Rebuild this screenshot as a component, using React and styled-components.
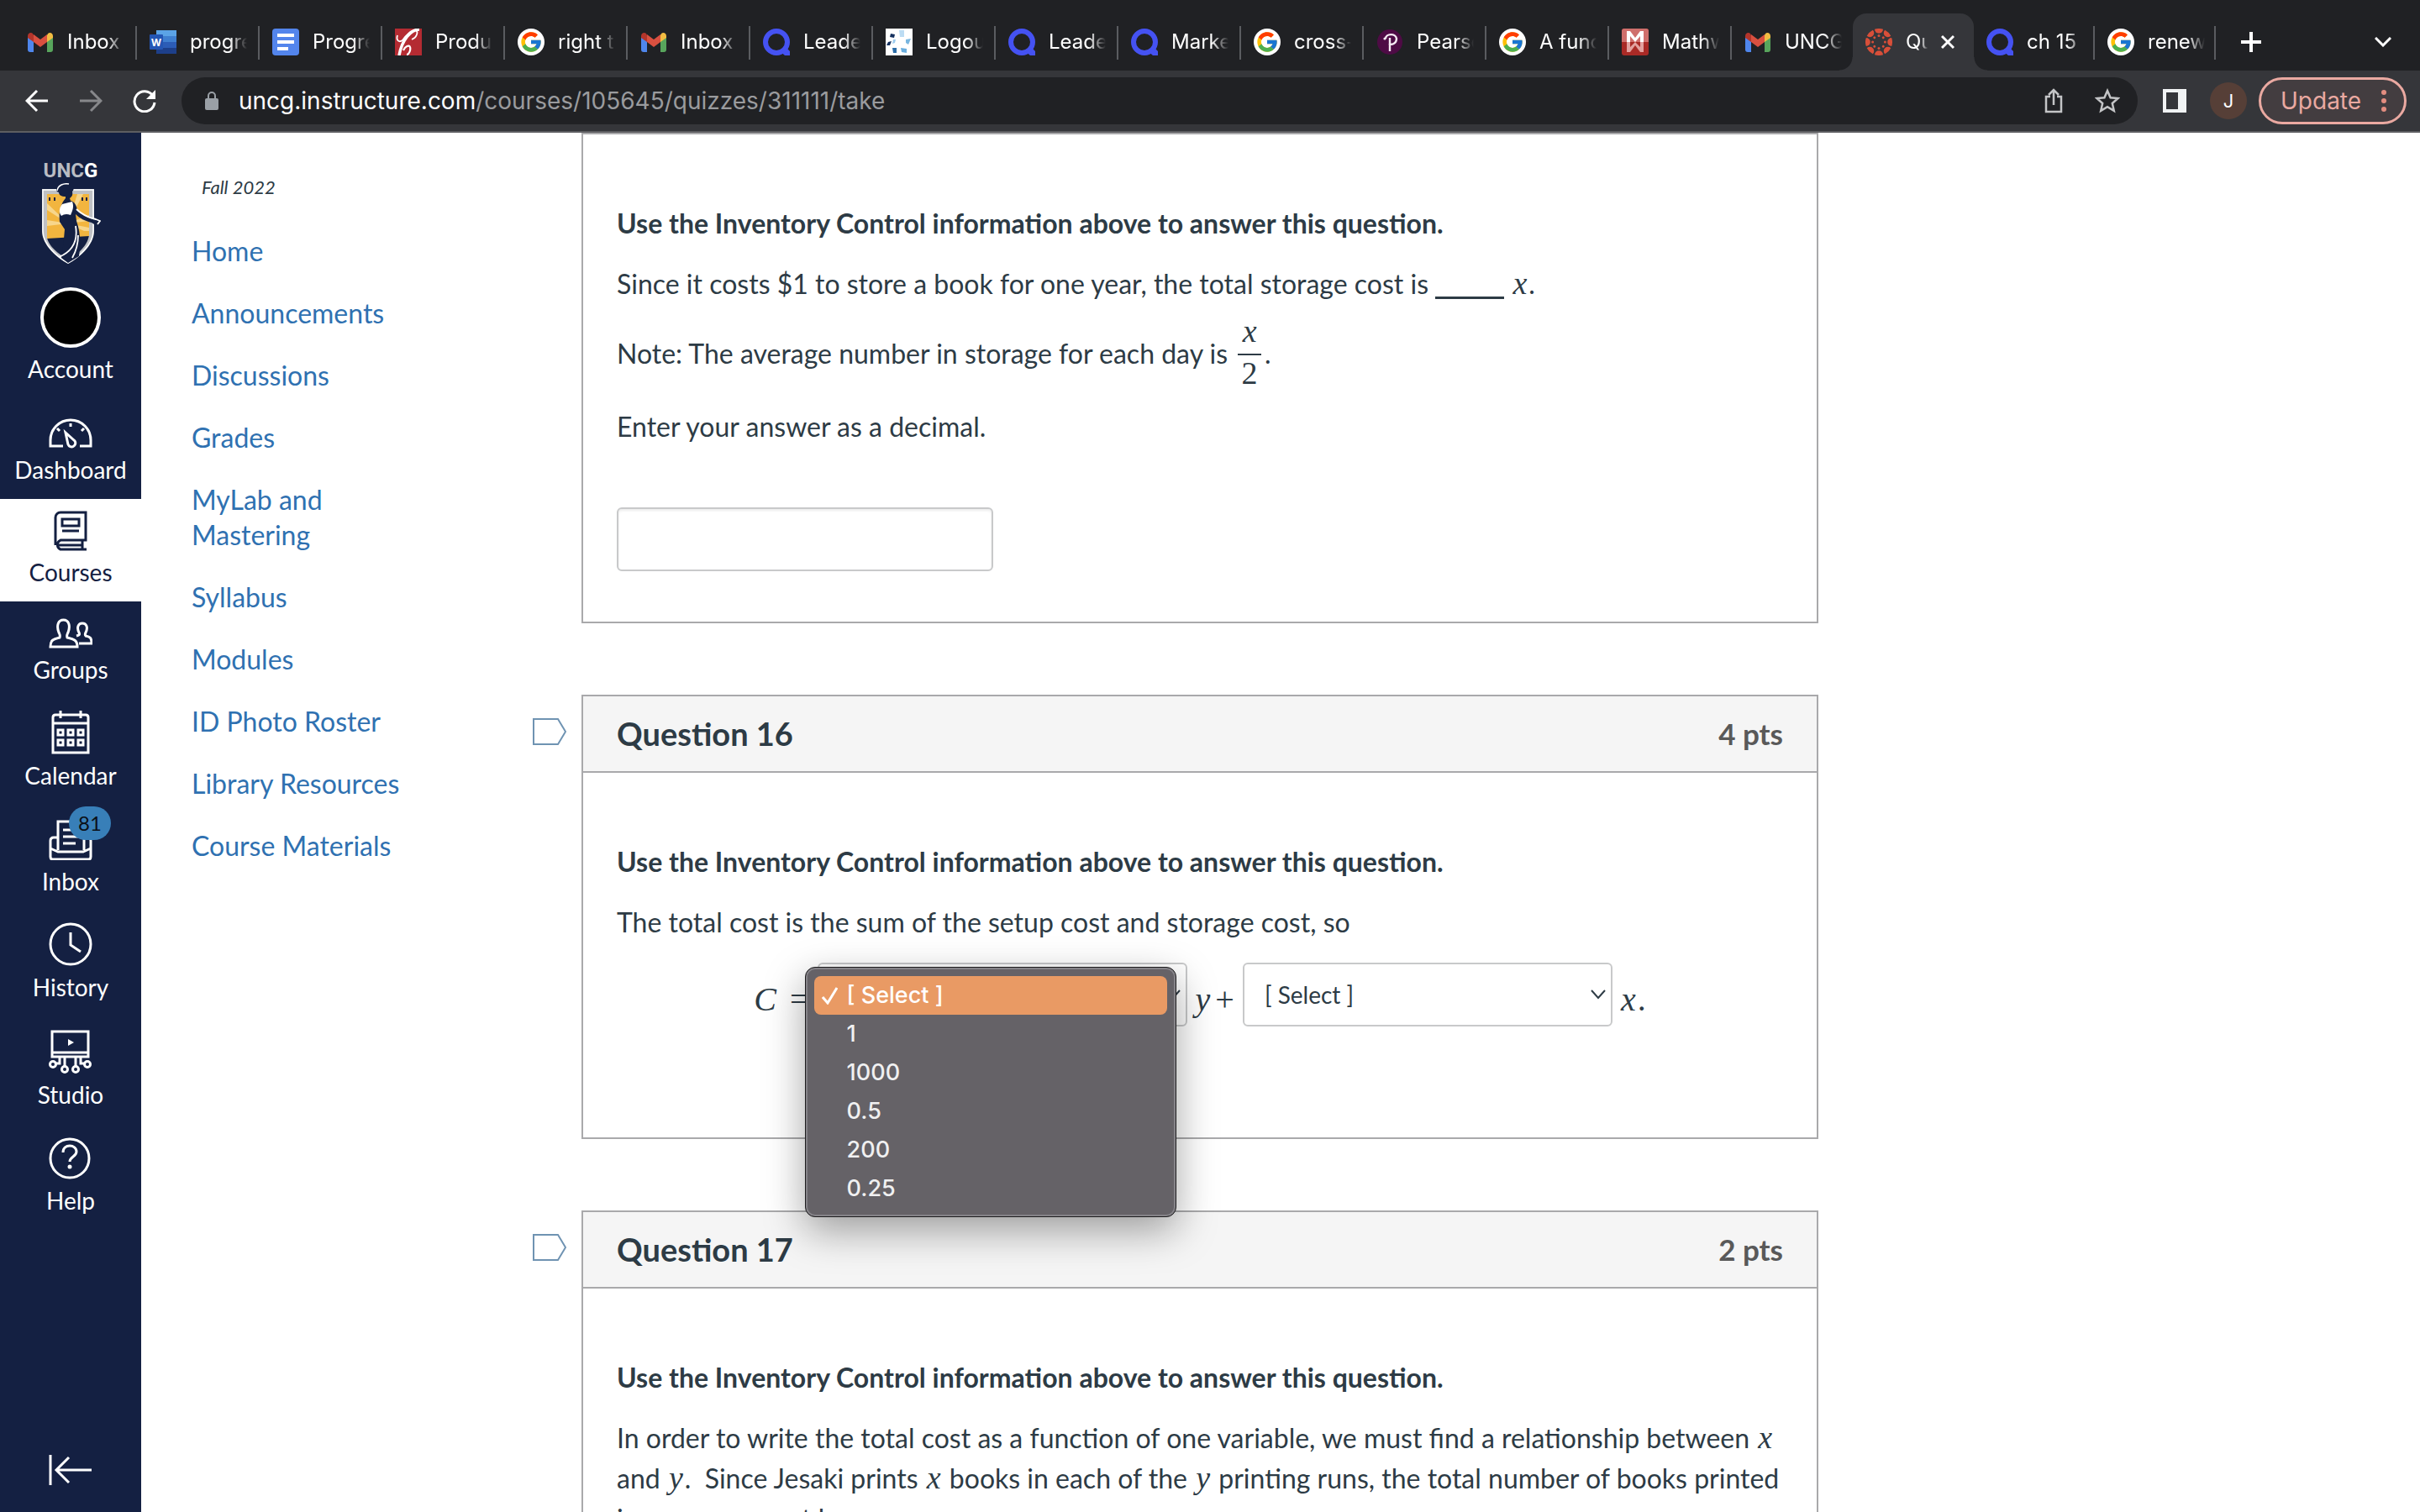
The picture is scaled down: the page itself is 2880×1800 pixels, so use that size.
import React from 'react';
import styled, { createGlobalStyle, css } from 'styled-components';
import { FcGoogle } from 'react-icons/fc';

const ui = `Inter, Roboto, "Liberation Sans", sans-serif`;
const lato = `Lato, "Open Sans", "Liberation Sans", sans-serif`;
const serif = `"Liberation Serif", "DejaVu Serif", serif`;

const ink = '#2d3b45';
const navy = '#142042';
const rule = '#a9a9ab';

const GlobalStyle = createGlobalStyle`
  *, *::before, *::after { box-sizing: border-box; }
  body { margin: 0; background: #fff; color: ${ink}; font-family: ${lato}; font-size: 32px; }
  h2, p, ul { margin: 0; padding: 0; }
  ul { list-style: none; }
  button { font: inherit; border: 0; background: none; padding: 0; color: inherit; }
  svg { display: block; flex: none; }
`;

const Window = styled.div`
  display: flex;
  flex-direction: column;
  height: 100vh;
  overflow: hidden;
`;

/* ---------- browser chrome ---------- */

const TabStrip = styled.div`
  display: flex;
  align-items: flex-end;
  flex: none;
  height: 84px;
  padding: 0 28px 0 17px;
  background: #202124;
  color: #fff;
  font-family: ${ui};
  font-size: 24px;
`;

const Tab = styled.div`
  position: relative;
  display: flex;
  align-items: center;
  gap: 16px;
  flex: none;
  width: ${(p) => (p.$narrow ? 144 : 146)}px;
  height: 68px;
  padding-left: 15px;
  ${(p) =>
    p.$line &&
    css`
      &::after {
        content: '';
        position: absolute;
        right: 0;
        top: 15px;
        width: 2px;
        height: 40px;
        background: #5a5c60;
      }
    `}
  ${(p) =>
    p.$active &&
    css`
      background: #35363a;
      border-radius: 16px 16px 0 0;
      &::before,
      &::after {
        content: '';
        position: absolute;
        bottom: 0;
        width: 16px;
        height: 16px;
      }
      &::before {
        right: 100%;
        background: radial-gradient(circle at 0 0, transparent 15px, #35363a 16px);
      }
      &::after {
        left: 100%;
        background: radial-gradient(circle at 100% 0, transparent 15px, #35363a 16px);
      }
    `}
`;

const TabTitle = styled.span`
  width: ${(p) => (p.$short ? 26 : 68)}px;
  overflow: hidden;
  white-space: nowrap;
  line-height: 32px;
  mask-image: linear-gradient(to right, #000 70%, transparent);
`;

const ChromeButton = styled.button`
  display: flex;
  align-items: center;
  justify-content: center;
  flex: none;
  width: 32px;
  height: 68px;
  ${(p) => p.$end && 'margin-left: auto;'}
`;

const PlusButton = styled(ChromeButton)`
  margin-left: 26px;
`;

const Toolbar = styled.div`
  display: flex;
  align-items: center;
  flex: none;
  height: 74px;
  padding: 0 16px 0 28px;
  background: #35363a;
  border-bottom: 2px solid #5d5e61;
  font-family: ${ui};
  font-size: 28px;
`;

const NavButtons = styled.div`
  display: flex;
  gap: 32px;
  margin-right: 28px;
`;

const ToolButton = styled.button`
  display: flex;
  align-items: center;
  justify-content: center;
  width: 32px;
  height: 40px;
`;

const AddressBar = styled.div`
  display: flex;
  align-items: center;
  flex: 1;
  height: 56px;
  padding: 0 20px 0 28px;
  border-radius: 28px;
  background: #202124;
  color: #9a9b9e;
`;

const Address = styled.div`
  flex: 1;
  margin-left: 24px;
  line-height: 36px;
  white-space: nowrap;
`;

const Host = styled.span`
  color: #fff;
`;

const AddressActions = styled.div`
  display: flex;
  gap: 32px;
`;

const ToolbarEnd = styled.div`
  display: flex;
  align-items: center;
  gap: 14px;
  margin-left: 30px;
`;

const Profile = styled.button`
  width: 44px;
  height: 44px;
  margin: 0 0 0 14px;
  border-radius: 50%;
  background: #563f37;
  color: #fff;
  font-size: 22px;
`;

const UpdateButton = styled.button`
  display: flex;
  align-items: center;
  justify-content: space-between;
  width: 176px;
  height: 56px;
  padding: 0 20px 0 23px;
  border: 3px solid #eaa9a1;
  border-radius: 28px;
  background: #433d40;
  color: #eaa9a1;
`;

/* ---------- page ---------- */

const Page = styled.div`
  display: grid;
  grid-template-columns: 168px 466px minmax(0, 1fr) 716px;
  grid-template-rows: minmax(0, 1fr);
  flex: 1;
  min-height: 0;
  overflow: hidden;
`;

const GlobalNav = styled.nav`
  display: flex;
  flex-direction: column;
  min-height: 0;
  padding: 30px 0;
  background: ${navy};
  color: #fff;
`;

const LogoLink = styled.a`
  display: flex;
  flex-direction: column;
  align-items: center;
  height: 142px;
  color: #b9bcc3;
  text-decoration: none;
  font: 700 24px/30px Roboto, sans-serif;
`;

const LogoAccent = styled.span`
  color: #fff;
`;

const NavItem = styled.a`
  display: flex;
  flex-direction: column;
  align-items: center;
  padding: 12px 0 18px;
  gap: 8px;
  background: ${(p) => (p.$active ? '#fff' : 'transparent')};
  color: ${(p) => (p.$active ? navy : '#fff')};
  font-size: 28px;
  line-height: 34px;
  text-decoration: none;
`;

const NavIcon = styled.span`
  position: relative;
  display: flex;
  align-items: flex-end;
  height: ${(p) => p.$height}px;
`;

const Avatar = styled.span`
  width: 72px;
  height: 72px;
  border: 4px solid #fff;
  border-radius: 50%;
  background: #000;
`;

const Badge = styled.span`
  position: absolute;
  left: 24px;
  top: -10px;
  width: 50px;
  height: 40px;
  border-radius: 20px;
  background: #387fb8;
  color: #0b0f16;
  font-size: 24px;
  line-height: 40px;
  text-align: center;
`;

const CollapseButton = styled.button`
  display: flex;
  justify-content: center;
  margin-top: auto;
`;

const CourseNav = styled.nav`
  padding: 50px 120px 0 60px;
`;

const Term = styled.p`
  padding-left: 12px;
  font-size: 22px;
  font-style: italic;
  line-height: 30px;
`;

const CourseLinks = styled.ul`
  padding-top: 24px;
`;

const CourseLink = styled.a`
  display: block;
  padding: 16px 0;
  color: #2f71b1;
  line-height: 42px;
  text-decoration: none;
`;

const Main = styled.main`
  display: flex;
  flex-direction: column;
  gap: 85px;
  min-width: 0;
`;

const QuestionRow = styled.div`
  display: flex;
  flex: none;
`;

const FlagColumn = styled.div`
  flex: 0 0 58px;
  padding-top: 28px;
`;

const Card = styled.section`
  flex: 1;
  min-width: 0;
  border: 2px solid ${rule};
`;

const CardHeader = styled.header`
  display: flex;
  justify-content: space-between;
  padding: 20px 40px 21px;
  background: #f5f5f5;
  border-bottom: 2px solid ${rule};
  font-weight: 700;
  line-height: 48px;
`;

const CardTitle = styled.h2`
  font-size: 38px;
`;

const Points = styled.span`
  color: #595959;
  font-size: 35px;
`;

const CardBody = styled.div`
  display: flex;
  flex-direction: column;
  gap: 24px;
  padding: 82px 40px ${(p) => p.$bottom}px;
  line-height: 48px;
`;

const NoteLine = styled.p`
  display: flex;
  align-items: center;
  height: 74px;
  padding-bottom: 4px;
`;

const Var = styled.i`
  font-family: ${serif};
  font-size: 38px;
  line-height: 36px;
  padding: 0 2px;
`;

const Blank = styled.span`
  display: inline-block;
  width: 82px;
  height: 3px;
  background: ${ink};
  vertical-align: -6px;
`;

const Fraction = styled.span`
  display: flex;
  flex-direction: column;
  align-items: center;
  width: 28px;
  margin: 0 4px 0 12px;
  font-family: ${serif};
  font-size: 38px;
  line-height: 42px;
`;

const Numerator = styled.span`
  width: 28px;
  padding-bottom: 10px;
  border-bottom: 2px solid ${ink};
  font-style: italic;
  line-height: 34px;
  text-align: center;
`;

const AnswerInput = styled.input`
  width: 448px;
  height: 76px;
  margin-top: 48px;
  padding: 0 24px;
  border: 2px solid #c8c9ca;
  border-radius: 6px;
  box-shadow: inset 0 2px 3px rgba(0, 0, 0, 0.08);
  font: 28px/40px ${lato};
`;

const Equation = styled.div`
  display: flex;
  align-items: center;
  justify-content: center;
  gap: 10px;
`;

const MathText = styled.span`
  display: flex;
  gap: ${(p) => p.$gap || 2}px;
  padding-top: 12px;
  font-family: ${serif};
  font-size: 40px;
  line-height: 48px;
`;

const SelectWrap = styled.div`
  position: relative;
  width: 440px;
`;

const Select = styled.select`
  display: block;
  width: 100%;
  height: 76px;
  padding: 0 24px;
  appearance: none;
  border: 2px solid #c8c9ca;
  border-radius: 6px;
  background: #fff;
  color: ${ink};
  font: 28px/40px ${lato};
`;

const SelectArrow = styled.svg`
  position: absolute;
  right: 8px;
  top: 32px;
  pointer-events: none;
`;

const Menu = styled.ul`
  position: absolute;
  z-index: 2;
  left: -15px;
  top: 5px;
  width: 442px;
  border: 1px solid #1d1c1e;
  border-radius: 12px;
  background: #656267;
  box-shadow: inset 0 0 0 2px #858388, 0 16px 48px rgba(0, 0, 0, 0.36);
  color: #f0f0f1;
  font-family: ${ui};
  font-size: 27px;
  font-weight: 500;
  && { padding: 10px; }
`;

const MenuOption = styled.li`
  display: flex;
  align-items: center;
  height: 46px;
  padding-left: ${(p) => (p.$selected ? 9 : 39)}px;
  gap: 11px;
  border-radius: 8px;
  background: ${(p) => (p.$selected ? '#e99a64' : 'transparent')};
  color: ${(p) => (p.$selected ? '#fff' : 'inherit')};
  line-height: 46px;
`;

/* ---------- favicons ---------- */

const GmailIcon = () => (
  <svg width="32" height="32" viewBox="0 0 32 32">
    <path d="M1 9v16a3 3 0 0 0 3 3h4V15z" fill="#4f86ec" />
    <path d="M31 9v16a3 3 0 0 1-3 3h-4V15z" fill="#58a55c" />
    <path d="M24 8v8l7-5V9c0-4-4-5-6-3z" fill="#f2bd42" />
    <path d="M1 9v2l7 5V8L7 6C5 4 1 5 1 9z" fill="#b3352b" />
    <path d="M8 7l8 6 8-6v9l-8 6-8-6z" fill="#d95040" />
  </svg>
);

const WordIcon = () => (
  <svg width="32" height="32" viewBox="0 0 32 32">
    <rect x="8" y="2" width="24" height="7" fill="#5ba3e6" />
    <rect x="8" y="9" width="24" height="7" fill="#3f7fd0" />
    <rect x="8" y="16" width="24" height="7" fill="#2c5cb6" />
    <rect x="8" y="23" width="24" height="7" fill="#1d3f8a" />
    <rect x="0" y="7" width="16" height="18" rx="1" fill="#2456b4" />
    <text x="8" y="21" textAnchor="middle" fontFamily="Inter, sans-serif" fontWeight="700" fontSize="12" fill="#fff">W</text>
  </svg>
);

const DocsIcon = () => (
  <svg width="32" height="32" viewBox="0 0 32 32">
    <rect width="32" height="32" rx="4" fill="#5385ec" />
    <path d="M6 6h20v4H6zM6 14h20v4H6zM6 22h13v4H6z" fill="#fff" />
  </svg>
);

const ScriptIcon = () => (
  <svg width="32" height="32" viewBox="0 0 32 32">
    <rect width="32" height="32" fill="#b42b32" />
    <path d="M29 1C19 1 8 14 5 32" fill="none" stroke="#fff" strokeWidth="3.5" />
    <path d="M20 13c6-2 8-9 5-11-5-1-12 6-16 12-4 3-8 0-6-6" fill="none" stroke="#fff" strokeWidth="1.8" />
    <path d="M10 26c2-5 7-7 8-4s-1 9-4 9" fill="none" stroke="#fff" strokeWidth="2.2" />
  </svg>
);

const GoogleIcon = () => (
  <svg width="32" height="32" viewBox="0 0 32 32">
    <circle cx="16" cy="16" r="16" fill="#fff" />
    <FcGoogle x="2" y="2" width="28" height="28" size={28} />
  </svg>
);

const RingIcon = () => (
  <svg width="32" height="32" viewBox="0 0 32 32">
    <circle cx="16" cy="16" r="13" fill="none" stroke="#4552f2" strokeWidth="6" />
    <path d="M19 26l10-2 3 3v5h-6z" fill="#4552f2" />
  </svg>
);

const BlocksIcon = () => (
  <svg width="32" height="32" viewBox="0 0 32 32">
    <rect width="32" height="32" fill="#fff" />
    <path d="M6 6l5 1-1 4-5-1zM3 16l4-1-2 5-4 0z" fill="#16315f" />
    <path d="M16 2h6v8h-5z" fill="#bcdcf3" />
    <path d="M24 13l6-1-3 7-3-2z" fill="#79b6e0" />
    <path d="M8 23h5v6H9z" fill="#2c6da8" />
    <path d="M18 23l7 1v5l-6-1z" fill="#6aaede" />
    <path d="M9 13l3 0-1 4-3 1z" fill="#9ccbee" />
  </svg>
);

const PearsonIcon = () => (
  <svg width="32" height="32" viewBox="0 0 32 32">
    <circle cx="16" cy="16" r="15" fill="#4e0b45" />
    <path d="M11 12c0-6 12-7 13 0 0 6-6 8-9 6M16 11v16" fill="none" stroke="#f5e9f3" strokeWidth="2.4" />
    <circle cx="10" cy="12" r="1.6" fill="#f5e9f3" />
  </svg>
);

const MirrorIcon = () => (
  <svg width="32" height="32" viewBox="0 0 32 32">
    <rect width="32" height="32" rx="3" fill="#a92a26" />
    <path d="M0 3a3 3 0 0 1 3-3h26a3 3 0 0 1 3 3v13H0z" fill="#cf6f6c" />
    <path d="M6 16V3h4l6 8 6-8h4v13h-4V9l-6 7-6-7v7z" fill="#fff" />
    <path d="M6 28V16h4v6l6-6 6 6v-6h4v12h-4l-6-8-6 8z" fill="#e2a19f" />
  </svg>
);

const CanvasIcon = () => (
  <svg width="32" height="32" viewBox="0 0 32 32" fill="#d84f39">
    {[0, 45, 90, 135, 180, 225, 270, 315].map((a) => (
      <g key={a} transform={`rotate(${a} 16 16)`}>
        <path d="M11 .8a16 16 0 0 1 10 0 5 5 0 0 1-10 0z" />
        <circle cx="16" cy="8.6" r="1.500" />
      </g>
    ))}
  </svg>
);

const tabs = [
  [GmailIcon, 'Inbox'],
  [WordIcon, 'progre'],
  [DocsIcon, 'Progre'],
  [ScriptIcon, 'Produ'],
  [GoogleIcon, 'right t'],
  [GmailIcon, 'Inbox'],
  [RingIcon, 'Leade'],
  [BlocksIcon, 'Logou'],
  [RingIcon, 'Leade'],
  [RingIcon, 'Marke'],
  [GoogleIcon, 'cross-'],
  [PearsonIcon, 'Pearso'],
  [GoogleIcon, 'A func'],
  [MirrorIcon, 'Mathw'],
  [GmailIcon, 'UNCG'],
  [CanvasIcon, 'Qu'],
  [RingIcon, 'ch 15'],
  [GoogleIcon, 'renew'],
];
const ACTIVE = 15;

/* ---------- line icons ---------- */

const Line = ({ w, h, sw = 3, children, ...rest }) => (
  <svg width={w} height={h} viewBox={`0 0 ${w} ${h}`} fill="none" stroke="currentColor" strokeWidth={sw} {...rest}>
    {children}
  </svg>
);

const Shield = () => (
  <svg width="72" height="100" viewBox="0 0 72 100">
    <path d="M2 7h62v50c0 18-20 33-31 39C22 90 2 75 2 57z" fill="#bfc1c5" />
    <path d="M3 8h60v49c0 17-19 32-30 38C22 89 3 74 3 57z" fill="none" stroke="#fff" strokeWidth="1.500" />
    <path d="M8 13h50v44H8z" fill="#f2b53f" />
    <path d="M33 48L8 24v8zM33 48L8 44v7zM33 48L44 13h7zM33 48l25-10v7zM33 48l25 5v4h-6z" fill="#f7d68c" />
    <path d="M8 65l50-3C56 76 42 86 33 91 24 86 10 76 8 65z" fill={navy} />
    <path d="M8 57h50v6L8 66z" fill="#f2b53f" />
    <path d="M30 16c-5 0-8-2-8-5-4-1-4-5 0-6 2-5 11-6 14-2 5 1 4 5 2 7 1 5-1 6-3 8l1 3c5 1 7 6 8 11 6 6 12 9 22 12l4 3-3 4-6-4c-8-2-14-5-19-10l1 8c5 14 5 28 3 42l-13 8-8-6c2-9 3-23 4-34l-6-9c-1-9 0-20 7-28z" fill={navy} />
    <path d="M26 25l12-3c2 5 1 10-2 16-5-2-8-1-11 1-3-4-3-9 1-14z" fill="#fff" />
    <path d="M43 31c6 6 14 10 23 12l5 2-3 4M42 51c3 18-3 30-20 37M45 62c0 12-3 20-7 27" fill="none" stroke="#fff" strokeWidth="1.800" />
    <path d="M20 9c1-7 8-9 14-8" fill="none" stroke="#fff" strokeWidth="1.500" />
    <path d="M11 17v4M17 17v4M50 17v4M55 17v4" stroke={navy} strokeWidth="2" />
  </svg>
);

const DashboardIcon = () => (
  <Line w={52} h={36}>
    <path d="M17 33H2v-7a24 24 0 0 1 48 0v7H37M26 6v4M10 12l3 3M42 12l-3 3" />
    <path d="M20 17l11 10a4.500 4.500 0 1 1-8 4z" />
  </Line>
);
const CoursesIcon = () => (
  <Line w={40} h={48}>
    <path d="M39 46H8a6 6 0 0 1 0-11h30V2H8a6 6 0 0 0-6 6v33M34 35v11M6 41h28" />
    <path d="M10 10h20v8H10zM10 24h20" />
  </Line>
);
const GroupsIcon = () => (
  <Line w={52} h={36}>
    <path d="M2 34c0-8 3-9 11-11 1-3 0-4-1-6-3-8-1-15 5.500-15S26 9 23 17c-1 2-2 3-1 6 8 2 12 3 12 11z" />
    <path d="M33 21c4-1 4-2 3-4-3-6-1-11 4-11s7 5 4 11c-1 2-1 3 0 4 5 1 7 2 7 9H36" />
  </Line>
);
const CalendarIcon = () => (
  <Line w={46} h={52}>
    <path d="M2 50V8q0-3 3-3h36q3 0 3 3v42zM2 15h42M11 0v9M35 0v9" />
    <path d="M8 23h6v6H8zM20 23h6v6h-6zM32 23h6v6h-6zM8 35h6v6H8zM20 35h6v6h-6zM32 35h6v6h-6z" />
  </Line>
);
const InboxIcon = () => (
  <Line w={52} h={48}>
    <path d="M11 36V2h31v34M2 44V25q0-4 4-4h5M41 21h5q4 0 4 4v19q0 3-3 3H5q-3 0-3-3M2 34l9 4h30l9-4M17 12h18M17 20h18M17 28h15" />
  </Line>
);
const HistoryIcon = () => (
  <Line w={52} h={52}>
    <circle cx="26" cy="26" r="24" />
    <path d="M26 12v15l12 8" />
  </Line>
);
const StudioIcon = () => (
  <Line w={52} h={52}>
    <path d="M4 2h43v30H4zM4 27h43M13 32v8H8M19 32v12M32 32v12M38 32v8h5" />
    <circle cx="5" cy="41" r="3.500" />
    <circle cx="19" cy="47" r="3.500" />
    <circle cx="32" cy="47" r="3.500" />
    <circle cx="46" cy="41" r="3.500" />
    <path d="M23 11l7 4-7 4z" fill="currentColor" stroke="none" />
  </Line>
);
const HelpIcon = () => (
  <Line w={52} h={50}>
    <circle cx="25" cy="25" r="23" />
    <path d="M17 18c0-11 16-10 16-1 0 6-8 6-8 12" />
    <circle cx="25" cy="35" r="2.500" fill="currentColor" stroke="none" />
  </Line>
);

const FlagIcon = () => (
  <svg width="40" height="32" viewBox="0 0 40 32">
    <path d="M1 1h29l9 15-9 15H1z" fill="#fff" stroke="#6f93b2" strokeWidth="2" />
  </svg>
);

const Chevron = () => (
  <SelectArrow width="18" height="12" viewBox="0 0 18 12" fill="none" stroke={ink} strokeWidth="2">
    <path d="M1 1l8 9 8-9" />
  </SelectArrow>
);

const globalItems = [
  ['Dashboard', DashboardIcon, 48],
  ['Courses', CoursesIcon, 50],
  ['Groups', GroupsIcon, 44],
  ['Calendar', CalendarIcon, 54],
  ['Inbox', InboxIcon, 54],
  ['History', HistoryIcon, 54],
  ['Studio', StudioIcon, 56],
  ['Help', HelpIcon, 54],
];

const courseLinks = [
  'Home', 'Announcements', 'Discussions', 'Grades', 'MyLab and Mastering', 'Syllabus',
  'Modules', 'ID Photo Roster', 'Library Resources', 'Course Materials',
];

const options = ['[ Select ]', '1', '1000', '0.5', '200', '0.25'];

function BrowserChrome() {
  return (
    <>
      <TabStrip>
        {tabs.map(([Icon, title], i) => (
          <Tab key={i} $active={i === ACTIVE} $narrow={i > 13} $line={i !== ACTIVE && i !== ACTIVE - 1}>
            <Icon />
            <TabTitle $short={i === ACTIVE}>{title}</TabTitle>
            {i === ACTIVE && (
              <button aria-label="Close tab">
                <Line w={16} h={18}><path d="M1 2l14 14M15 2L1 16" /></Line>
              </button>
            )}
          </Tab>
        ))}
        <PlusButton aria-label="New tab">
          <Line w={24} h={24} sw={4}><path d="M12 0v24M0 12h24" /></Line>
        </PlusButton>
        <ChromeButton $end aria-label="Search tabs">
          <Line w={20} h={12}><path d="M1 1l9 9 9-9" /></Line>
        </ChromeButton>
      </TabStrip>
      <Toolbar>
        <NavButtons>
          <ToolButton aria-label="Back">
            <Line w={28} h={28} color="#fff"><path d="M27 14H3M14 2L2 14l12 12" /></Line>
          </ToolButton>
          <ToolButton aria-label="Forward">
            <Line w={28} h={28} color="#87888b"><path d="M1 14h24M14 2l12 12-12 12" /></Line>
          </ToolButton>
          <ToolButton aria-label="Reload">
            <Line w={28} h={28} color="#fff">
              <path d="M24 8a12 12 0 1 0 2 8" />
              <path d="M27 1v11H16z" fill="#fff" stroke="none" />
            </Line>
          </ToolButton>
        </NavButtons>
        <AddressBar>
          <svg width="16" height="22" viewBox="0 0 16 22">
            <rect y="8" width="16" height="14" rx="2" fill="#9aa0a6" />
            <path d="M4 9V5a4 4 0 0 1 8 0v4" fill="none" stroke="#9aa0a6" strokeWidth="2" />
          </svg>
          <Address role="textbox" aria-label="Address">
            <Host>uncg.instructure.com</Host>/courses/105645/quizzes/311111/take
          </Address>
          <AddressActions>
            <ToolButton aria-label="Share">
              <Line w={22} h={30} sw={2.5} color="#c4c5c7">
                <path d="M7 10H2v18h18V10h-5M11 20V2M5 8l6-6 6 6" />
              </Line>
            </ToolButton>
            <ToolButton aria-label="Bookmark">
              <Line w={30} h={30} sw={2.5} color="#c4c5c7">
                <path d="M15 3l3.600 8.200 9 .8-6.800 6 2 8.800-7.800-4.700-7.800 4.700 2-8.800-6.800-6 9-.8z" />
              </Line>
            </ToolButton>
          </AddressActions>
        </AddressBar>
        <ToolbarEnd>
          <button aria-label="Side panel">
            <svg width="28" height="28" viewBox="0 0 28 28">
              <path d="M0 0h28v28H0zM4 4v20h14V4z" fill="#f1f3f4" fillRule="evenodd" />
            </svg>
          </button>
          <Profile aria-label="Profile">J</Profile>
          <UpdateButton>
            Update
            <svg width="8" height="28" viewBox="0 0 8 28" fill="#e38d80">
              <circle cx="4" cy="4" r="3" />
              <circle cx="4" cy="14" r="3" />
              <circle cx="4" cy="24" r="3" />
            </svg>
          </UpdateButton>
        </ToolbarEnd>
      </Toolbar>
    </>
  );
}

function Question({ title, points, bottom, children }) {
  return (
    <QuestionRow>
      <FlagColumn>{title && <FlagIcon />}</FlagColumn>
      <Card>
        {title && (
          <CardHeader>
            <CardTitle>{title}</CardTitle>
            <Points>{points}</Points>
          </CardHeader>
        )}
        <CardBody $bottom={bottom}>
          <p><strong>Use the Inventory Control information above to answer this question.</strong></p>
          {children}
        </CardBody>
      </Card>
    </QuestionRow>
  );
}

export default function App() {
  return (
    <Window>
      <GlobalStyle />
      <BrowserChrome />
      <Page>
        <GlobalNav aria-label="Global">
          <LogoLink href="#">
            <span>UNC<LogoAccent>G</LogoAccent></span>
            <Shield />
          </LogoLink>
          <NavItem href="#">
            <Avatar />
            Account
          </NavItem>
          {globalItems.map(([label, Icon, height]) => (
            <NavItem key={label} href="#" $active={label === 'Courses'}>
              <NavIcon $height={height}>
                <Icon />
                {label === 'Inbox' && <Badge>81</Badge>}
              </NavIcon>
              {label}
            </NavItem>
          ))}
          <CollapseButton aria-label="Collapse navigation">
            <Line w={52} h={40}><path d="M2 2v36M51 20H9M24 5L9 20l15 15" /></Line>
          </CollapseButton>
        </GlobalNav>
        <CourseNav aria-label="Course">
          <Term>Fall 2022</Term>
          <CourseLinks>
            {courseLinks.map((label) => (
              <li key={label}><CourseLink href="#">{label}</CourseLink></li>
            ))}
          </CourseLinks>
        </CourseNav>
        <Main>
          <Question bottom={60}>
            <p>
              Since it costs $1 to store a book for one year, the total storage cost is{' '}
              <Blank role="img" aria-label="blank" /> <Var>x</Var>.
            </p>
            <NoteLine>
              Note: The average number in storage for each day is
              <Fraction>
                <Numerator>x</Numerator>
                <span>2</span>
              </Fraction>
              .
            </NoteLine>
            <p>Enter your answer as a decimal.</p>
            <AnswerInput type="text" aria-label="Answer" />
          </Question>
          <Question title="Question 16" points="4 pts" bottom={132}>
            <p>The total cost is the sum of the setup cost and storage cost, so</p>
            <Equation>
              <MathText $gap={16}><i>C</i><span>=</span></MathText>
              <SelectWrap>
                <Select aria-label="Coefficient of y" defaultValue="[ Select ]">
                  {options.map((o) => <option key={o}>{o}</option>)}
                </Select>
                <Chevron />
                <Menu role="listbox" aria-label="Coefficient of y">
                  {options.map((o, i) => (
                    <MenuOption key={o} role="option" aria-selected={i === 0} $selected={i === 0}>
                      {i === 0 && <Line w={19} h={22}><path d="M1 13l6 7L18 2" /></Line>}
                      {o}
                    </MenuOption>
                  ))}
                </Menu>
              </SelectWrap>
              <MathText $gap={6}><i>y</i><span>+</span></MathText>
              <SelectWrap>
                <Select aria-label="Coefficient of x" defaultValue="[ Select ]">
                  {options.map((o) => <option key={o}>{o}</option>)}
                </Select>
                <Chevron />
              </SelectWrap>
              <MathText><i>x</i><span>.</span></MathText>
            </Equation>
          </Question>
          <Question title="Question 17" points="2 pts" bottom={60}>
            <p>
              In order to write the total cost as a function of one variable, we must find a relationship
              between <Var>x</Var> and <Var>y</Var>.&nbsp; Since Jesaki prints <Var>x</Var> books in each of
              the <Var>y</Var> printing runs, the total number of books printed in one year must be
            </p>
          </Question>
        </Main>
      </Page>
    </Window>
  );
}
